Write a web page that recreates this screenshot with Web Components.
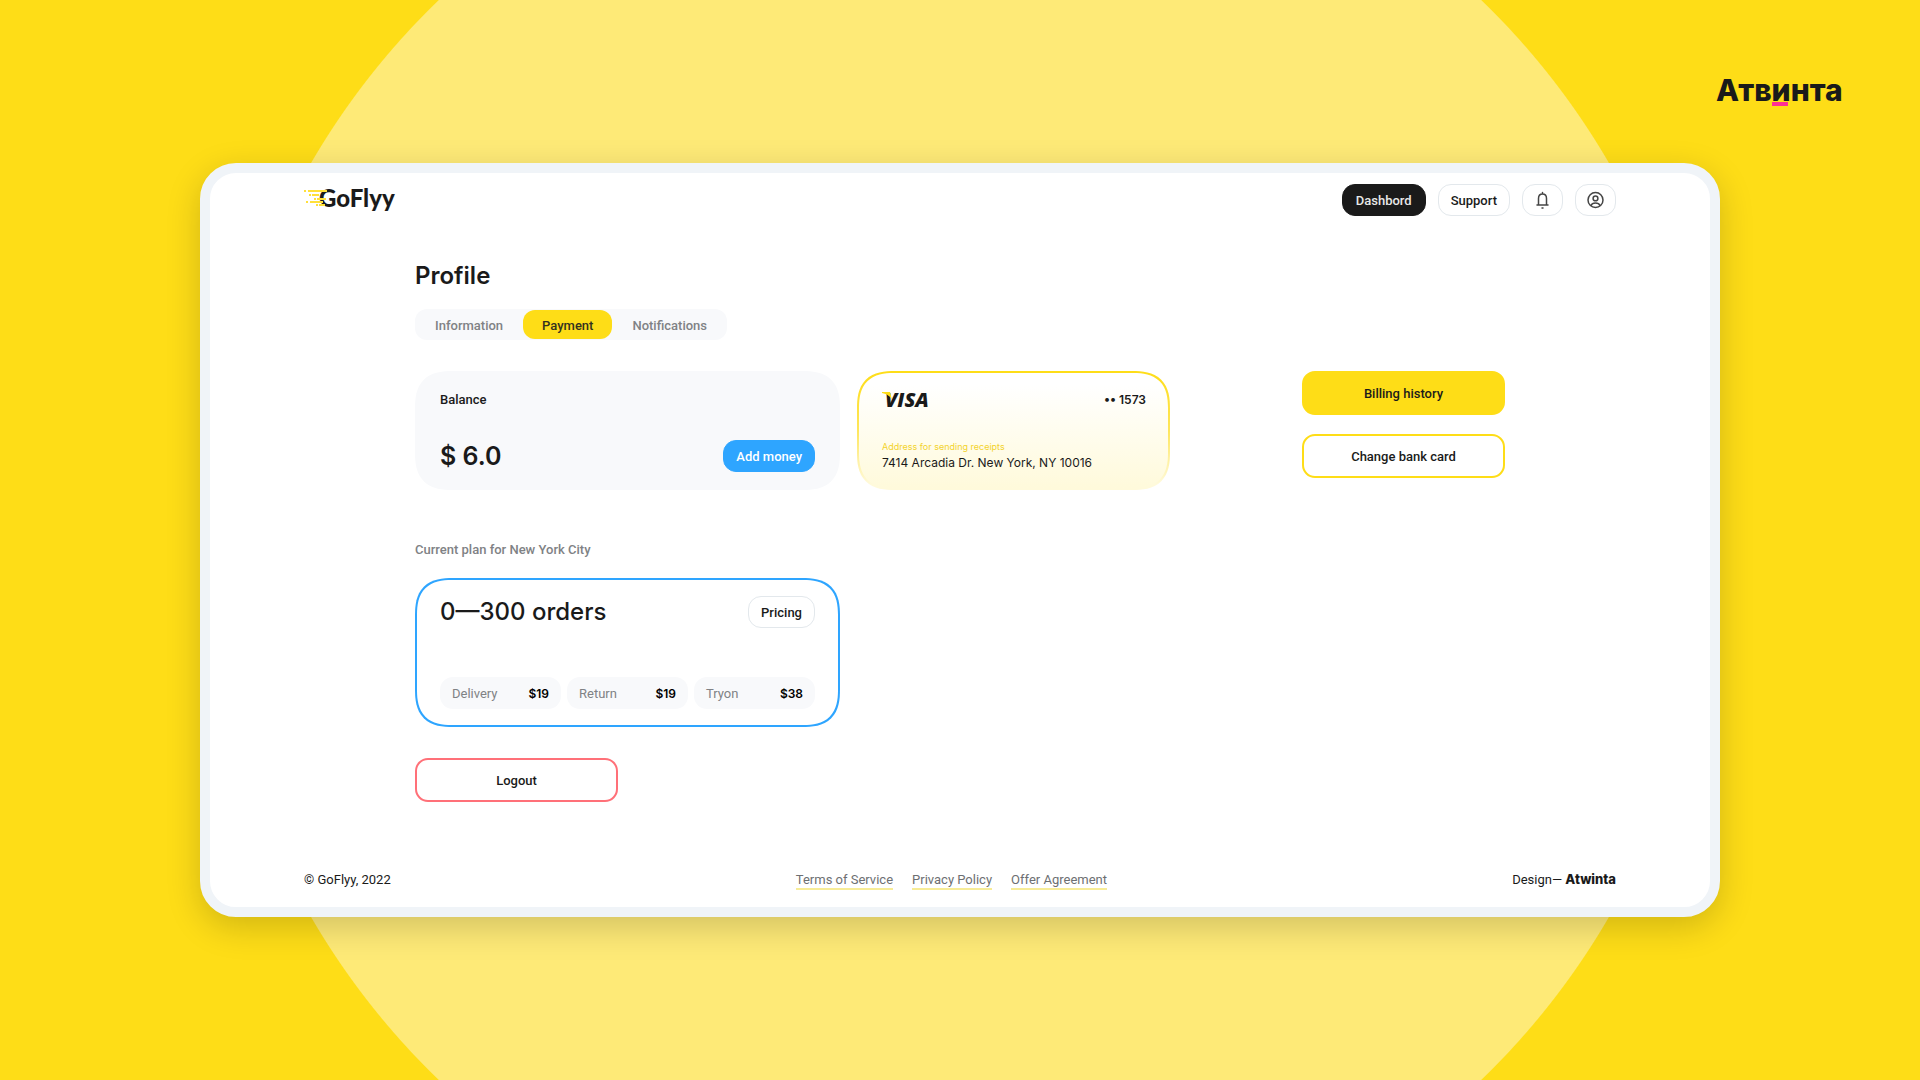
<!DOCTYPE html>
<html lang="en">
<head>
<meta charset="utf-8">
<meta name="viewport" content="width=device-width, initial-scale=1">
<title>GoFlyy – Profile</title>
<style>
  :root {
    --yellow: #fedd17;
    --yellow-soft: #feea77;
    --ink: #1a1a1a;
    --muted: #808285;
    --blue: #2ea5ff;
    --red: #ff7078;
    --line: #e3e8ec;
    --frame: #f0f4f8;
    --tint: #f8f9fb;
    --alt: Inter, "Liberation Sans", sans-serif;
  }
  body {
    margin: 0;
    color: var(--ink);
    font: 500 13px/20px Roboto, "Liberation Sans", sans-serif;
  }
</style>
</head>
<body>
<page-stage>
  <brand-mark slot="brand"></brand-mark>
  <app-window>
    <site-header slot="header"></site-header>
    <profile-page></profile-page>
    <site-footer slot="footer"></site-footer>
  </app-window>
</page-stage>

<script>
const base = `<style>
  *, *::before { box-sizing: border-box; }
  @supports (corner-shape: superellipse(1.4)) {
    :host(.card) { border-radius: 38px !important; corner-shape: superellipse(1.4); }
  }
</style>`;

const define = (name, html, setup) => {
  const template = document.createElement('template');
  template.innerHTML = base + html;
  customElements.define(name, class extends HTMLElement {
    constructor() {
      super();
      this.attachShadow({ mode: 'open' }).append(template.content.cloneNode(true));
    }
    connectedCallback() { if (setup) setup(this, this.shadowRoot); }
  });
};

define('page-stage', `
  <style>
    :host {
      display: grid; grid-template-rows: 1fr auto 1fr; min-height: 100vh;
      background: radial-gradient(circle at center, var(--yellow-soft) 750px, var(--yellow) 751px);
    }
    .brand { display: flex; justify-content: flex-end; align-items: flex-start; padding: 72px 76px 0 0; }
    .content { display: flex; justify-content: center; min-width: 0; }
  </style>
  <div class="brand"><slot name="brand"></slot></div>
  <div class="content"><slot></slot></div>
`);

define('brand-mark', `
  <style>
    :host { display: block; }
    svg { display: block; }
    text { font: 800 30px Inter, "Noto Sans", sans-serif; fill: var(--ink); }
  </style>
  <svg width="128" height="40" viewBox="0 0 128 40" role="img" aria-label="Атвинта">
    <text x="0" y="29">Атвинта</text>
    <rect x="56" y="30" width="16" height="4" fill="#ff2e93"/>
  </svg>
`);

define('app-window', `
  <style>
    :host {
      display: block; width: 100%; max-width: 1520px; box-sizing: border-box;
      border: 10px solid var(--frame); border-radius: 36px; background: #fff;
      box-shadow: 0 10px 34px rgba(0, 0, 0, .18);
    }
    .inner { max-width: 1312px; margin: 0 auto; padding: 11px 0 17px; display: flex; flex-direction: column; }
    main { width: 100%; max-width: 1090px; margin: 0 auto; padding: 44px 0 68px; }
  </style>
  <div class="inner">
    <slot name="header"></slot>
    <main><slot></slot></main>
    <slot name="footer"></slot>
  </div>
`);

define('flyy-logo', `
  <style>
    :host { display: block; margin: -4px 0; }
    svg { display: block; }
    text { font: 900 24px Lato, sans-serif; fill: var(--ink); }
  </style>
  <svg width="104" height="40" viewBox="0 -4 104 40" role="img" aria-label="GoFlyy">
    <text x="15" y="23">GoFlyy</text>
    <g stroke="#ffe03a" stroke-width="2">
      <path d="M0 7h2M4 7h19M5 11h2M8 11h7M10 15h2M13 15h9M2 18h2M6 18h13M12 21h2M15 21h6"/>
    </g>
  </svg>
`);

define('ui-button', `
  <style>
    :host { display: block; }
    button {
      display: flex; align-items: center; justify-content: center; width: 100%; height: 32px;
      margin: 0; padding: 2px 12px 0; border: 1px solid var(--line); border-radius: 13px;
      background: #fff; color: var(--ink); font: inherit; white-space: nowrap; cursor: pointer;
    }
    :host([kind="dark"]) button { background: var(--ink); border-color: var(--ink); color: #e8e8e8; padding: 2px 13px 0; }
    :host([kind="blue"]) button { background: var(--blue); border-color: var(--blue); color: #fff; }
    :host([kind="icon"]) button { padding: 0 10px; }
    :host([size="large"]) button { height: 44px; border-width: 2px; }
    :host([kind="yellow"]) button { background: var(--yellow); border-color: var(--yellow); }
    :host([kind="outline"]) button { border-color: var(--yellow); }
    :host([kind="danger"]) button { border-color: var(--red); }
  </style>
  <button type="button"><slot></slot></button>
`, (host, root) => {
  const label = host.getAttribute('label');
  if (label) root.querySelector('button').setAttribute('aria-label', label);
});

define('site-header', `
  <style>
    :host { display: block; }
    header, nav { display: flex; align-items: center; }
    header { justify-content: space-between; }
    nav { gap: 12px; }
    svg { display: block; fill: none; stroke: #454545; stroke-width: 1.5; stroke-linejoin: round; stroke-linecap: round; }
  </style>
  <header>
    <flyy-logo></flyy-logo>
    <nav>
      <ui-button kind="dark">Dashbord</ui-button>
      <ui-button>Support</ui-button>
      <ui-button kind="icon" label="Notifications">
        <svg width="19" height="18" viewBox="0 0 19 18">
          <path d="M4 14h11M5.500 14V7.500C5.500 4.500 7.300 3 9.500 3S13.500 4.500 13.500 7.500V14M9.500 3V1.500M9 17h1"/>
        </svg>
      </ui-button>
      <ui-button kind="icon" label="Account">
        <svg width="19" height="18" viewBox="0 0 19 18">
          <circle cx="9.500" cy="9" r="7.500"/><circle cx="9.500" cy="7.400" r="2.400"/>
          <path d="M5 14.600c.6-1.800 2.300-2.700 4.500-2.700s3.900.9 4.500 2.700"/>
        </svg>
      </ui-button>
    </nav>
  </header>
`);

define('tab-bar', `
  <style>
    :host { display: flex; }
    div { display: flex; gap: 1px; padding: 1px; border-radius: 12px; background: var(--tint); }
    button {
      height: 29px; margin: 0; padding: 2px 19px 0; border: 0; border-radius: 12px;
      background: none; color: var(--muted); font: inherit; cursor: pointer;
    }
    [aria-selected="true"] { background: var(--yellow); color: #33321f; }
  </style>
  <div role="tablist">
    <button role="tab" aria-selected="false">Information</button>
    <button role="tab" aria-selected="true">Payment</button>
    <button role="tab" aria-selected="false">Notifications</button>
  </div>
`);

define('balance-card', `
  <style>
    :host {
      display: flex; flex-direction: column; justify-content: space-between; box-sizing: border-box;
      min-height: 119px; padding: 19px 25px 18px; border-radius: 30px; background: var(--tint);
    }
    .row { display: flex; align-items: center; justify-content: space-between; }
    .amount { font: 600 25px/32px var(--alt); }
  </style>
  <div>Balance</div>
  <div class="row"><span class="amount">$ 6.0</span><ui-button kind="blue">Add money</ui-button></div>
`);

define('bank-card', `
  <style>
    :host {
      display: flex; flex-direction: column; justify-content: space-between; box-sizing: border-box;
      min-height: 119px; padding: 17px 22px 17px 23px; border: 2px solid transparent; border-radius: 30px;
      background:
        linear-gradient(#fff 10%, #fffadb) padding-box,
        linear-gradient(var(--yellow), #fee65c 50%, #fffadb 95%) border-box;
      font: 400 12px/16px var(--alt);
    }
    .row { display: flex; align-items: center; justify-content: space-between; }
    .number { font-weight: 600; line-height: 20px; }
    .label { font-size: 9px; color: #f3d32c; }
    svg { display: block; margin: -4px 0; }
    text { font: italic 800 20px "Open Sans", sans-serif; fill: var(--ink); }
  </style>
  <div class="row">
    <svg width="60" height="28" viewBox="0 -5 60 28" role="img" aria-label="Visa">
      <text x="3" y="16">VISA</text>
      <path d="M0 1h8l2 8C8 5 5 3 0 2z" fill="#fedd17"/>
    </svg>
    <span class="number">•• 1573</span>
  </div>
  <div>
    <div class="label">Address for sending receipts</div>
    <div>7414 Arcadia Dr. New York, NY 10016</div>
  </div>
`);

define('price-chip', `
  <style>
    :host {
      display: flex; flex: 1; align-items: center; justify-content: space-between; box-sizing: border-box;
      height: 32px; padding: 2px 12px 0; border-radius: 13px; background: var(--tint);
    }
    .name { font-weight: 400; color: var(--muted); }
    .price { font: 600 12px/20px var(--alt); color: #000; }
  </style>
  <span class="name"><slot></slot></span><span class="price"><slot name="price"></slot></span>
`);

define('plan-card', `
  <style>
    :host {
      display: flex; flex-direction: column; justify-content: space-between; box-sizing: border-box;
      min-height: 149px; padding: 16px 23px; border: 2px solid var(--blue); border-radius: 30px;
    }
    .row { display: flex; align-items: center; justify-content: space-between; }
    .chips { display: flex; gap: 6px; }
    h2 { margin: 0; font: 500 24px/32px var(--alt); }
  </style>
  <div class="row"><h2>0—300 orders</h2><ui-button>Pricing</ui-button></div>
  <div class="chips">
    <price-chip>Delivery<span slot="price">$19</span></price-chip>
    <price-chip>Return<span slot="price">$19</span></price-chip>
    <price-chip>Tryon<span slot="price">$38</span></price-chip>
  </div>
`);

define('profile-page', `
  <style>
    :host { display: block; }
    h1 { margin: 0 0 17px; font: 600 24px/32px var(--alt); }
    .columns { display: flex; justify-content: space-between; margin-top: 31px; }
    .cards { display: grid; grid-template-columns: 425px 313px; column-gap: 17px; }
    .actions { display: flex; flex-direction: column; gap: 19px; width: 203px; }
    .caption { margin: 50px 0 18px; color: var(--muted); }
    plan-card { max-width: 425px; }
    .logout { width: 203px; margin-top: 31px; }
  </style>
  <h1>Profile</h1>
  <tab-bar></tab-bar>
  <div class="columns">
    <div class="cards"><balance-card class="card"></balance-card><bank-card class="card"></bank-card></div>
    <div class="actions">
      <ui-button size="large" kind="yellow">Billing history</ui-button>
      <ui-button size="large" kind="outline">Change bank card</ui-button>
    </div>
  </div>
  <div class="caption">Current plan for New York City</div>
  <plan-card class="card"></plan-card>
  <ui-button class="logout" size="large" kind="danger">Logout</ui-button>
`);

define('site-footer', `
  <style>
    :host { display: block; font-weight: 400; }
    footer { display: flex; align-items: center; justify-content: space-between; }
    nav { display: flex; gap: 19px; }
    a { color: #6d6f72; text-decoration: none; }
    nav a { box-shadow: inset 0 -2px #f7ec97; }
    .credit a { color: var(--ink); font: 800 13px/16px var(--alt); }
  </style>
  <footer>
    <span>© GoFlyy, 2022</span>
    <nav><a href="#terms">Terms of Service</a><a href="#privacy">Privacy Policy</a><a href="#offer">Offer Agreement</a></nav>
    <span class="credit">Design— <a href="#atwinta">Atwinta</a></span>
  </footer>
`);
</script>
</body>
</html>
